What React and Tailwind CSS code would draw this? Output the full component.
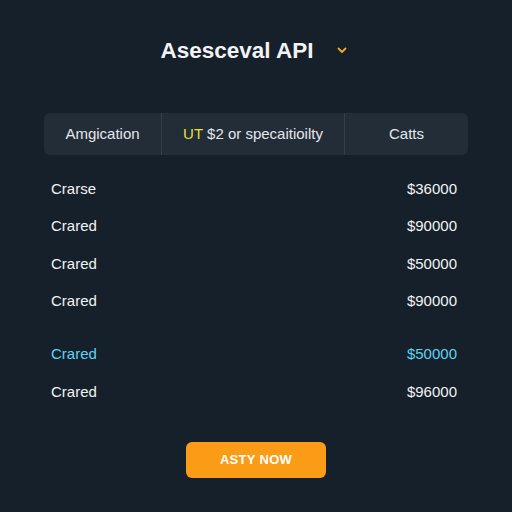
import React from 'react';

const rows = [
    { name: 'Crarse', price: '$36000' },
    { name: 'Crared', price: '$90000' },
    { name: 'Crared', price: '$50000' },
    { name: 'Crared', price: '$90000' },
];

export default function App() {
    return (
        <div className="w-[512px] h-[512px] bg-[#16202a] text-[#f1f3f5] font-['Liberation_Sans',Arial,sans-serif] flex flex-col overflow-hidden">
            <div className="flex items-center justify-center gap-[22px] pt-[37px] pr-[4px]">
                <h1 className="text-[22.5px] font-bold leading-[28px]">Asesceval API</h1>
                <svg width="12" height="12" viewBox="0 0 12 12" className="mt-[-2px]">
                    <path d="M2.5 4.5 L6 8 L9.5 4.5" fill="none" stroke="#f5a524" strokeWidth="1.8" strokeLinecap="round" strokeLinejoin="round" />
                </svg>
            </div>

            <div className="mx-[44px] mt-[48px] h-[42px] rounded-md bg-[#222d38] grid grid-cols-[118px_183px_1fr] text-[15px] text-[#e4e7eb]">
                <div className="flex items-center justify-center border-r border-[#33404c]">Amgication</div>
                <div className="flex items-center justify-center border-r border-[#33404c]">
                    <span className="text-[#e8dd3a] mr-1">UT</span>$2 or specaitioilty
                </div>
                <div className="flex items-center justify-center">Catts</div>
            </div>

            <div className="ml-[51px] mr-[55px] mt-[15px] flex flex-col text-[15px]">
                {rows.map((r, i) => (
                    <div key={i} className="flex justify-between h-[37.5px] items-center">
                        <span>{r.name}</span>
                        <span>{r.price}</span>
                    </div>
                ))}
                <div className="flex justify-between h-[37.5px] items-center mt-[15px] text-[#5fd3ef]">
                    <span>Crared</span>
                    <span>$50000</span>
                </div>
                <div className="flex justify-between h-[40px] items-center">
                    <span>Crared</span>
                    <span>$96000</span>
                </div>
            </div>

            <div className="flex justify-center mt-[29px]">
                <button className="w-[140px] h-[36px] rounded-md bg-[#fa9c16] text-white text-[13px] font-bold tracking-[0.3px]">
                    ASTY NOW
                </button>
            </div>
        </div>
    );
}
